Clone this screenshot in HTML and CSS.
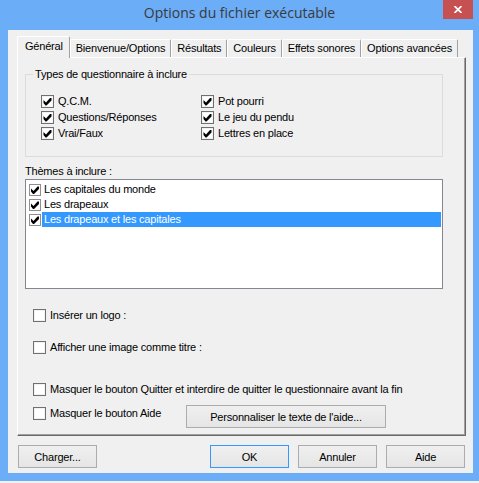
FILE: index.html
```html
<!DOCTYPE html>
<html lang="fr">
<head>
<meta charset="utf-8">
<title>Options du fichier exécutable</title>
<link rel="stylesheet" href="styles.css">
</head>
<body>
<div class="window">
  <div class="titlebar">
    <div class="title">Options du fichier exécutable</div>
    <button class="close" aria-label="Fermer"><svg width="8" height="7" viewBox="0 0 8 7"><path d="M0.5 0 L7.5 7 M7.5 0 L0.5 7" stroke="#fff" stroke-width="1.7"/></svg></button>
  </div>
  <div class="client">
    <div class="tabs">
      <div class="tab active">Général</div>
      <div class="tab">Bienvenue/Options</div>
      <div class="tab">Résultats</div>
      <div class="tab">Couleurs</div>
      <div class="tab">Effets sonores</div>
      <div class="tab">Options avancées</div>
    </div>
    <div class="panel">
      <fieldset class="group">
        <legend>Types de questionnaire à inclure</legend>
        <div class="types">
          <label class="check"><span class="cb on"></span>Q.C.M.</label>
          <label class="check"><span class="cb on"></span>Pot pourri</label>
          <label class="check"><span class="cb on"></span>Questions/Réponses</label>
          <label class="check"><span class="cb on"></span>Le jeu du pendu</label>
          <label class="check"><span class="cb on"></span>Vrai/Faux</label>
          <label class="check"><span class="cb on"></span>Lettres en place</label>
        </div>
      </fieldset>
      <div class="caption">Thèmes à inclure :</div>
      <div class="list">
        <div class="item"><span class="cb small on"></span><span class="text">Les capitales du monde</span></div>
        <div class="item"><span class="cb small on"></span><span class="text">Les drapeaux</span></div>
        <div class="item sel"><span class="cb small on"></span><span class="text">Les drapeaux et les capitales</span></div>
      </div>
      <label class="check opt opt-logo"><span class="cb"></span>Insérer un logo :</label>
      <label class="check opt opt-image"><span class="cb"></span>Afficher une image comme titre :</label>
      <label class="check opt opt-quit"><span class="cb"></span>Masquer le bouton Quitter et interdire de quitter le questionnaire avant la fin</label>
      <div class="opt-row">
        <label class="check help-check"><span class="cb"></span>Masquer le bouton Aide</label>
        <button class="btn btn-wide">Personnaliser le texte de l'aide...</button>
      </div>
    </div>
    <div class="buttons">
      <button class="btn">Charger...</button>
      <button class="btn default push">OK</button>
      <button class="btn">Annuler</button>
      <button class="btn">Aide</button>
    </div>
  </div>
</div>
</body>
</html>
```
FILE: styles.css
```css
* { box-sizing: border-box; }
html, body { margin: 0; }
body {
  background: #f0f0f0;
  font-family: "Liberation Sans", Arial, sans-serif;
  font-size: 11px;
  letter-spacing: -0.2px;
  color: #000;
}
.window {
  width: 479px;
  height: 481px;
  background: #6badf6;
  display: flex;
  flex-direction: column;
}
.titlebar {
  height: 30px;
  flex: none;
  display: grid;
  grid-template-columns: 1fr auto 1fr;
  align-items: start;
}
.title {
  grid-column: 2;
  font-family: "Open Sans", "Noto Sans", sans-serif;
  font-size: 14px;
  line-height: 20px;
  padding-top: 3px;
  letter-spacing: 0;
  color: #3a3a3a;
  white-space: nowrap;
}
.close {
  grid-column: 3;
  justify-self: end;
  margin-right: 6px;
  width: 30px;
  height: 19px;
  padding: 0;
  border: 0;
  background: #c75050;
  display: flex;
  align-items: center;
  justify-content: center;
}
.client {
  margin: 0 6px 8px 8px;
  height: 443px;
  background: #f0f0f0;
  padding: 6px 7px 0 9px;
  display: flex;
  flex-direction: column;
}
.tabs {
  display: flex;
  align-items: flex-end;
  height: 21px;
  position: relative;
  z-index: 1;
}
.tab {
  height: 18px;
  padding: 2px 5px 0;
  line-height: 13px;
  white-space: nowrap;
  background: #f0f0f0;
  border-top: 1px solid #fff;
  border-left: 1px solid #fff;
  border-right: 1px solid #a0a0a0;
  border-radius: 2px 2px 0 0;
}
.tab.active {
  height: 22px;
  padding: 3px 6px 0 7px;
  margin-bottom: -1px;
}
.panel {
  height: 379px;
  border: 1px solid;
  border-color: #fff #696969 #696969 #fff;
  box-shadow: inset -1px -1px #a0a0a0;
  padding: 10px 0 0 7px;
}
.group {
  margin: 0;
  width: 418px;
  border: 1px solid #dcdcdc;
  padding: 12px 0 15px 15px;
}
.group legend {
  padding: 0 2px;
  margin-left: -8px;
  line-height: 13px;
}
.types {
  display: grid;
  grid-template-columns: 160px auto;
  grid-auto-rows: 16px;
}
.check {
  display: flex;
  align-items: center;
  gap: 4px;
  height: 16px;
  white-space: nowrap;
}
.cb {
  flex: none;
  position: relative;
  width: 13px;
  height: 13px;
  border: 1px solid #707070;
  background: #fff;
  box-shadow: inset 0 0 0 1px #f2f2f2;
}
.cb.on::after {
  content: "";
  position: absolute;
  inset: 0;
  background: #000;
  clip-path: polygon(1.5px 4.5px, 4px 7px, 8px 2.5px, 9.5px 2.5px, 9.5px 5px, 4.5px 10px, 3.5px 10px, 1.5px 7.5px);
}
.cb.small {
  width: 12px;
  height: 12px;
  border-color: #8f8f8f;
  box-shadow: none;
}
.cb.small.on::after {
  clip-path: polygon(1px 4px, 3.5px 6.5px, 7.5px 2px, 9px 2px, 9px 4.5px, 4px 9.5px, 3px 9.5px, 1px 7px);
}
.caption {
  margin: 8px 0 1px;
  line-height: 13px;
}
.list {
  width: 418px;
  height: 110px;
  border: 1px solid #828790;
  background: #fff;
  padding: 2px 1px 0 3px;
}
.item {
  display: flex;
  align-items: center;
  height: 15px;
}
.item .text {
  flex: 1;
  margin-left: 1px;
  padding-left: 2px;
  line-height: 15px;
  height: 15px;
  white-space: nowrap;
}
.item.sel .text {
  background: #3399ff;
  color: #fff;
}
.opt { margin-left: 8px; }
.opt-logo { margin-top: 18px; }
.opt-image { margin-top: 16px; }
.opt-quit { margin-top: 26px; }
.opt-row {
  display: flex;
  align-items: flex-start;
  margin: 8px 0 0 8px;
}
.help-check { width: 153px; }
.btn {
  height: 23px;
  width: 79px;
  padding: 0;
  border: 1px solid #acacac;
  background: linear-gradient(#f0f0f0, #e5e5e5);
  font: inherit;
  letter-spacing: inherit;
  color: #000;
  text-align: center;
}
.btn-wide { width: 200px; }
.btn.default { border-color: #3399ff; }
.buttons {
  display: flex;
  gap: 9px;
  margin-top: 9px;
  padding: 0 1px;
}
.buttons .push { margin-left: auto; }
```
